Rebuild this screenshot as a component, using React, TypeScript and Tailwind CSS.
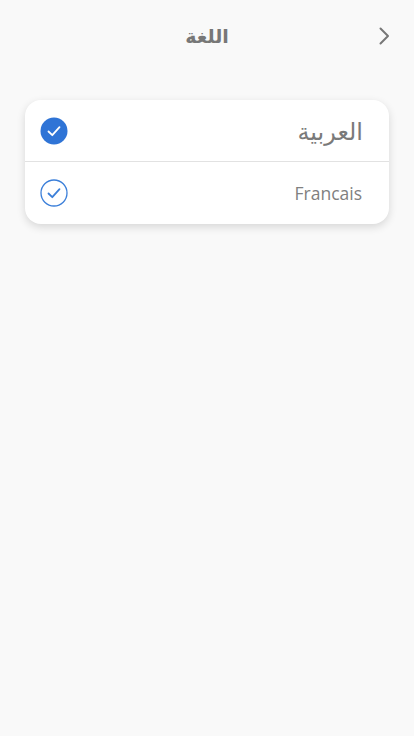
import React from "react";

const CheckIcon: React.FC<{ filled?: boolean }> = ({ filled }) => (
  <svg width="28" height="28" viewBox="0 0 28 28">
    {filled ? (
      <circle cx="14" cy="14" r="13.5" fill="#2f74d6" />
    ) : (
      <circle cx="14" cy="14" r="13" fill="none" stroke="#3b7fd9" strokeWidth="1.3" />
    )}
    <path
      d="M8.5 14.5 L12.3 18.2 L19.5 10.2"
      fill="none"
      stroke={filled ? "#ffffff" : "#3b7fd9"}
      strokeWidth="1.8"
      strokeLinecap="round"
      strokeLinejoin="round"
    />
  </svg>
);

const App: React.FC = () => {
  return (
    <div
      className="w-[414px] h-[736px] bg-[#f9f9f9]"
      style={{ fontFamily: '"Open Sans", "DejaVu Sans", sans-serif' }}
    >
      {/* Header */}
      <header className="relative h-[72px] flex items-center justify-center">
        <h1 className="text-[19px] font-bold text-[#777777]" dir="rtl">
          اللغة
        </h1>
        <button className="absolute right-[19px] top-[25px] text-[#777777]">
          <svg width="22" height="22" viewBox="0 0 22 22">
            <path
              d="M7.5 3.5 L15 11 L7.5 18.5"
              fill="none"
              stroke="currentColor"
              strokeWidth="2"
              strokeLinecap="round"
              strokeLinejoin="round"
            />
          </svg>
        </button>
      </header>

      {/* Languages */}
      <div className="mx-[25px] mt-[28px] bg-white rounded-[16px] shadow-[0_3px_8px_rgba(0,0,0,0.14)]">
        <div className="h-[62px] flex items-center justify-between pl-[15px] pr-[26px] border-b border-[#e2e2e2]">
          <CheckIcon filled />
          <span className="text-[24px] text-[#7a7a7a] leading-none" dir="rtl">
            العربية
          </span>
        </div>
        <div className="h-[62px] flex items-center justify-between pl-[15px] pr-[27px]">
          <CheckIcon />
          <span className="text-[17.5px] text-[#808080]">Francais</span>
        </div>
      </div>
    </div>
  );
};

export default App;
